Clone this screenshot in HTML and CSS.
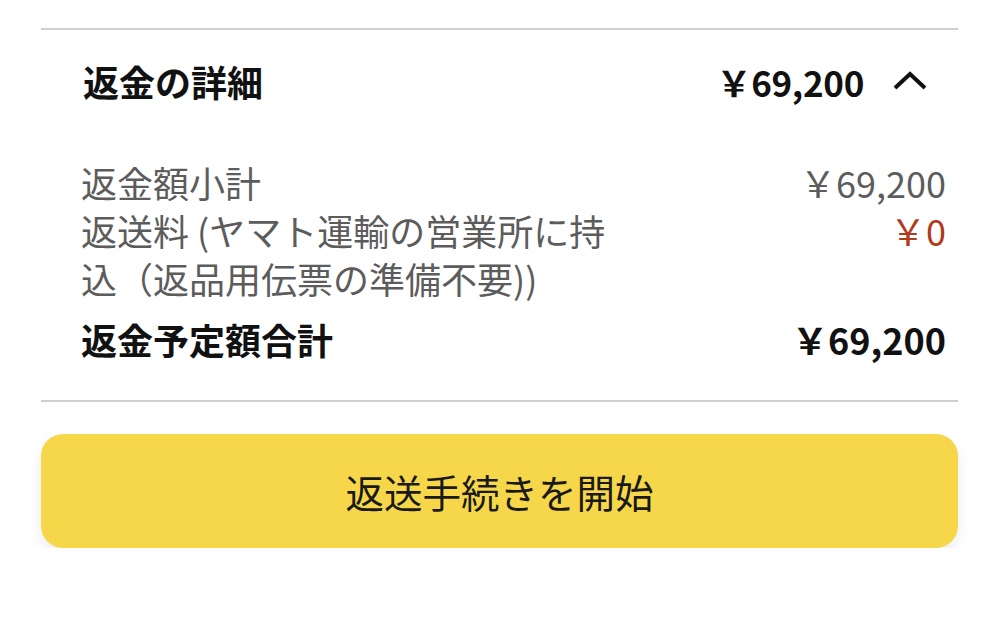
FILE: index.html
```html
<!DOCTYPE html>
<html lang="ja">
  <head>
    <meta charset="UTF-8" />
    <meta name="viewport" content="width=device-width, initial-scale=1.0" />
    <title>返金の詳細</title>
    <link rel="stylesheet" href="styles.css">
  </head>
  <body>
    <div class="refund-panel">
      <div class="summary-head">
        <h2 class="summary-title">返金の詳細</h2>
        <div class="summary-total">
          <span>￥69,200</span>
          <svg class="chevron" width="36" height="20" viewBox="0 0 36 20">
            <path d="M3 17 L18 3 L33 17" fill="none" stroke="#111" stroke-width="4" />
          </svg>
        </div>
      </div>

      <div class="details">
        <div class="detail-row">
          <div class="label">返金額小計</div>
          <div class="value">￥69,200</div>
        </div>
        <div class="detail-row">
          <div class="label">返送料 (ヤマト運輸の営業所に持込（返品用伝票の準備不要))</div>
          <div class="value free">￥0</div>
        </div>
        <div class="detail-row total">
          <div class="label">返金予定額合計</div>
          <div class="value">￥69,200</div>
        </div>
      </div>

      <button class="start-btn" type="button">返送手続きを開始</button>
    </div>
  </body>
</html>
```

FILE: styles.css
```css
body {
  margin: 0;
  background: #fff;
  font-family: "Noto Sans CJK JP", "Noto Sans", sans-serif;
  color: #111;
}

.refund-panel {
  margin: 0 41px;
  padding-top: 28px;
}

.summary-head {
  display: flex;
  align-items: center;
  justify-content: space-between;
  box-sizing: border-box;
  height: 112px;
  padding: 0 30px 8px 42px;
  border-top: 2px solid #cfcfcf;
}

.summary-title {
  margin: 0;
  font-size: 36px;
  font-weight: 700;
}

.summary-total {
  display: flex;
  align-items: center;
  gap: 28px;
  font-size: 35px;
  font-weight: 700;
  letter-spacing: -0.3px;
}

.chevron {
  display: block;
}

.details {
  padding: 18px 12px 37px 40px;
  border-bottom: 2px solid #cfcfcf;
}

.detail-row {
  display: flex;
  justify-content: space-between;
  font-size: 36px;
  line-height: 48px;
  color: #5c5c5c;
}

.detail-row .label {
  max-width: 530px;
}

.detail-row .value {
  text-align: right;
  white-space: nowrap;
}

.detail-row .free {
  color: #b23a1c;
}

.detail-row.total {
  margin-top: 13px;
  color: #111;
  font-weight: 700;
}

.start-btn {
  display: block;
  width: 100%;
  height: 114px;
  margin-top: 32px;
  border: none;
  border-radius: 22px;
  background: #f7d74a;
  box-shadow: 0 6px 14px rgba(0, 0, 0, 0.08);
  font-family: inherit;
  font-size: 38.5px;
  color: #1a1a1a;
}
```
